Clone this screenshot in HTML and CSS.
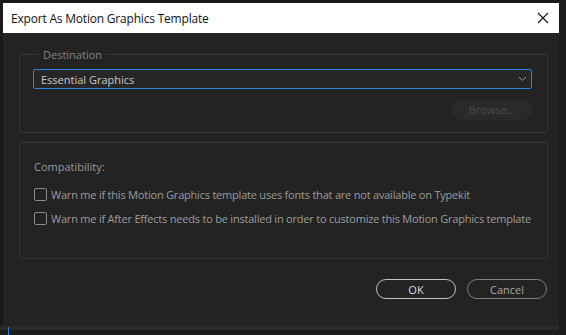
FILE: index.html
```html
<!DOCTYPE html>
<html lang="en">
<head>
  <meta charset="UTF-8">
  <title>Export As Motion Graphics Template</title>
  <link rel="stylesheet" href="styles.css">
</head>
<body>

  <div class="backdrop">
    <div class="dialog">
      <div class="titlebar">
        <span class="title">Export As Motion Graphics Template</span>
        <svg class="close" width="12" height="12" viewBox="0 0 12 12">
          <path d="M1 1 L11 11 M11 1 L1 11" stroke="#111" stroke-width="1.1" fill="none"/>
        </svg>
      </div>

      <div class="body">
        <fieldset class="group dest">
          <legend>Destination</legend>
          <div class="select">
            <span>Essential Graphics</span>
            <svg width="9" height="6" viewBox="0 0 9 6">
              <path d="M1 1 L4.5 4.5 L8 1" stroke="#9a9a9a" stroke-width="1" fill="none"/>
            </svg>
          </div>
          <div class="browse-row">
            <button class="browse" disabled>Browse...</button>
          </div>
        </fieldset>

        <div class="group compat">
          <div class="label">Compatibility:</div>
          <label class="check"><span class="box"></span>Warn me if this Motion Graphics template uses fonts that are not available on Typekit</label>
          <label class="check"><span class="box"></span>Warn me if After Effects needs to be installed in order to customize this Motion Graphics template</label>
        </div>

        <div class="actions">
          <button class="btn ok">OK</button>
          <button class="btn cancel">Cancel</button>
        </div>
      </div>
    </div>
    <div class="statusbar">
      <span class="cursor"></span>
    </div>
  </div>

</body>
</html>
```

FILE: styles.css
```css
* {
  margin: 0;
  padding: 0;
  box-sizing: border-box;
  font-family: "Open Sans", "Noto Sans", sans-serif;
}

body {
  background: #1a1a1a;
  width: 566px;
  height: 335px;
  overflow: hidden;
}

.backdrop {
  padding: 3px 7px 0 3px;
}

.dialog {
  width: 556px;
  height: 323px;
  background: #232323;
  display: flex;
  flex-direction: column;
}

.titlebar {
  height: 30px;
  background: #fff;
  display: flex;
  align-items: center;
  justify-content: space-between;
  padding: 0 10px 0 8px;
}

.title {
  font-size: 12px;
  color: #111;
  letter-spacing: -0.2px;
}

.body {
  padding: 16px 11px 0 16px;
  display: flex;
  flex-direction: column;
}

.group {
  border: 1px solid #363636;
  border-radius: 3px;
}

.dest {
  height: 84px;
  padding: 0 15px 0 13px;
}

.dest legend {
  font-size: 11px;
  color: #858585;
  padding: 0 4px;
  margin-left: 6px;
  line-height: 11px;
}

.select {
  margin-top: 9px;
  height: 20px;
  border: 1px solid #2f80e4;
  border-radius: 2px;
  background: #262626;
  display: flex;
  align-items: center;
  justify-content: space-between;
  padding: 0 4px 0 7px;
  font-size: 11px;
  color: #c8c8c8;
}

.browse-row {
  display: flex;
  justify-content: flex-end;
  margin-top: 10px;
}

.browse {
  width: 80px;
  height: 21px;
  border: none;
  border-radius: 10px;
  background: #2a2a2a;
  color: #4c4c4c;
  font-size: 11px;
}

.compat {
  margin-top: 9px;
  height: 117px;
  padding: 16px 0 0 14px;
}

.label {
  font-size: 11px;
  color: #9a9a9a;
  line-height: 16px;
  margin-bottom: 11px;
}

.check {
  display: flex;
  align-items: center;
  font-size: 11px;
  color: #9c9c9c;
  height: 16px;
  margin-bottom: 8px;
  letter-spacing: -0.21px;
}

.box {
  width: 13px;
  height: 13px;
  border: 1px solid #8a8a8a;
  border-radius: 2px;
  margin-right: 4px;
  flex-shrink: 0;
}

.actions {
  display: flex;
  justify-content: flex-end;
  gap: 11px;
  margin-top: 20px;
  padding-right: 1px;
}

.btn {
  width: 80px;
  height: 20px;
  border-radius: 10px;
  background: transparent;
  font-size: 11px;
}

.ok {
  border: 1px solid #c4c4c4;
  color: #dcdcdc;
}

.cancel {
  border: 1px solid #808080;
  color: #a8a8a8;
}

.statusbar {
  height: 9px;
  margin-left: -3px;
  border-top: 4px solid #2a2a2a;
  background: #1c1c1c;
  position: relative;
}

.cursor {
  position: absolute;
  left: 8px;
  top: -3px;
  width: 1px;
  height: 12px;
  background: #2f80e4;
}
```
